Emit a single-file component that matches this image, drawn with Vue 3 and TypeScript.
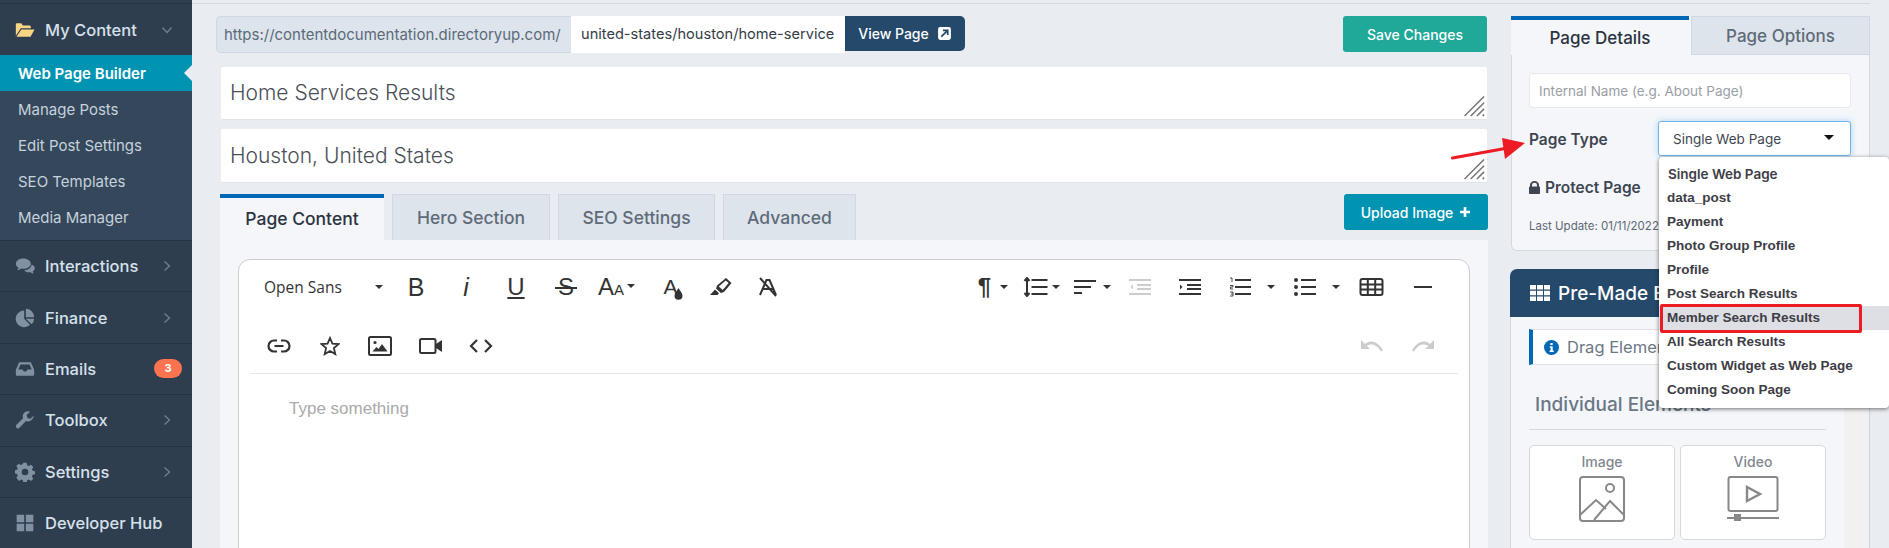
<template>
  <div class="page">
    <aside class="sidebar">
      <div class="nav-row nav-first">
        <svg class="nav-icon" viewBox="0 0 24 20"><path fill="#f8d583" d="M1 17V3.500C1 2.700 1.700 2 2.500 2h5l2 2.500h8c.8 0 1.500.7 1.500 1.500v2H7L1 17zM7.600 9.500H23.500L18.600 18H1.800z" /></svg>
        <span class="nav-label">My Content</span>
        <svg class="chev" viewBox="0 0 12 12"><path d="M1.500 3.500 6 8.500l4.500-5" /></svg>
      </div>
      <div class="sub-nav">
        <div v-for="(item, i) in subItems" :key="item" class="sub-item" :class="{ active: i === 0 }">{{ item }}</div>
      </div>
      <div v-for="item in navItems" :key="item.label" class="nav-row">
        <svg class="nav-icon" viewBox="0 0 24 24"><path fill="#7f91a2" :d="item.icon" /></svg>
        <span class="nav-label">{{ item.label }}</span>
        <span v-if="item.badge" class="badge">{{ item.badge }}</span>
        <svg v-else-if="item.arrow" class="chev" viewBox="0 0 12 12"><path d="M3.500 1.500 8.500 6l-5 4.500" /></svg>
      </div>
    </aside>

    <main class="content">
      <div class="left-col">
        <div class="url-row">
          <div class="url-group">
            <span class="url-prefix">https://contentdocumentation.directoryup.com/</span>
            <span class="url-input">united-states/houston/home-service</span>
            <button class="view-btn">View Page
              <svg width="15" height="15" viewBox="0 0 14 14"><rect x="1" y="1" width="12" height="12" rx="2" fill="#fff" /><path d="M4 10 9.500 4.500M5.500 4h4.500v4.500" stroke="#25496a" stroke-width="1.600" fill="none" /></svg>
            </button>
          </div>
          <button class="save-btn">Save Changes</button>
        </div>

        <div class="title-box title-one">Home Services Results<svg class="grip" viewBox="0 0 22 22"><path d="M.5 21 21 .5M7 21 21 7M13.500 21l7.500-7.500M19.500 21l1.500-1.500" /></svg></div>
        <div class="title-box title-two">Houston, United States<svg class="grip" viewBox="0 0 22 22"><path d="M.5 21 21 .5M7 21 21 7M13.500 21l7.500-7.500M19.500 21l1.500-1.500" /></svg></div>

        <div class="tab-row">
          <div class="tabs">
            <div v-for="(t, i) in contentTabs" :key="t" class="tab" :class="{ on: i === 0 }" :style="{ width: tabWidths[i] + 'px' }">{{ t }}</div>
          </div>
          <button class="upload-btn">Upload Image
            <svg width="12" height="12" viewBox="0 0 12 12"><path d="M6 1v10M1 6h10" stroke="#fff" stroke-width="2.600" /></svg>
          </button>
        </div>

        <div class="tab-panel">
          <div class="editor">
            <div class="toolbar">
              <div class="tool-row row-one">
                <div class="tool-group">
                  <span class="font-pick">Open Sans</span>
                  <i class="caret font-caret"></i>
                  <span class="tool glyph g-b">B</span>
                  <span class="tool glyph g-i">i</span>
                  <span class="tool glyph g-u"><u>U</u></span>
                  <span class="tool glyph g-s">S</span>
                  <span class="tool-size"><span class="a-big">A</span><span class="a-small">A</span><i class="caret"></i></span>
                  <span class="tool glyph g-a">A<svg width="9" height="12" viewBox="0 0 9 12"><path d="M4.500 0C6 3 8.500 5 8.500 7.800a4 4 0 0 1-8 0C.5 5 3 3 4.500 0z" fill="#333" /></svg></span>
                  <span class="tool t-mark"><svg width="24" height="20" viewBox="0 0 24 20"><path d="M8 8.500 17 1l5.500 5-7.500 9-3 1-5-4.500zM9.800 9.500l3.900 3.600 6-7-3-2.700z" fill="#333" fill-rule="evenodd" /><path d="M6 12.500l4 3.800-1.500 1.700H1z" fill="#333" /></svg></span>
                  <span class="tool t-clear"><svg width="24" height="20" viewBox="0 0 24 20"><path d="M4 18 10.500 3h3L20 18M7 12h10M4 1l16 18" stroke="#333" stroke-width="2" fill="none" /></svg></span>
                </div>
                <div class="tool-group">
                  <span class="para glyph">¶</span><i class="caret mr-p"></i>
                  <svg class="ic25" viewBox="0 0 25 20"><path d="M4 1v18M1.500 4 4 1l2.500 3M1.500 16 4 19l2.500-3M8.500 3h16M8.500 10h16M8.500 17h16" stroke="#333" stroke-width="2" fill="none" /></svg><i class="caret mr-lh ml4"></i>
                  <svg class="ic22" viewBox="0 0 22 20"><path d="M0 4h22M0 10h17M0 16h8" stroke="#333" stroke-width="2" /></svg><i class="caret mr20 ml8"></i>
                  <svg class="ic22 mr28" viewBox="0 0 22 20"><path d="M0 3h22M8 8h14M8 12h14M0 17h22" stroke="#ccc" stroke-width="2" /><path d="M4 7.500 1.500 10 4 12.500z" fill="#ccc" /></svg>
                  <svg class="ic22 mr28" viewBox="0 0 22 20"><path d="M0 3h22M8 8h14M8 12h14M0 17h22" stroke="#333" stroke-width="2" /><path d="M1 7.500 3.500 10 1 12.500z" fill="#333" /></svg>
                  <svg class="ic22" viewBox="0 0 22 20"><path d="M6 3h17M6 10h17M6 17h17" stroke="#333" stroke-width="2" /><path d="M1 1h2v4M1 8.500h3v1.500H1.500V12H4M1 15h3v4H1M2 17h2" stroke="#333" stroke-width=".9" fill="none" /></svg><i class="caret ml12 mr15"></i>
                  <svg class="ic22" viewBox="0 0 22 20"><path d="M7 3h15M7 10h15M7 17h15" stroke="#333" stroke-width="2" /><circle cx="2" cy="3" r="2" fill="#333" /><circle cx="2" cy="10" r="2" fill="#333" /><circle cx="2" cy="17" r="2" fill="#333" /></svg><i class="caret ml12 mr15"></i>
                  <svg class="ic25 mr30" viewBox="0 0 24 20"><rect x="1" y="2" width="22" height="16" rx="2" fill="none" stroke="#333" stroke-width="2" /><path d="M1 7.500h22M1 12.500h22M8.300 2v16M15.700 2v16" stroke="#333" stroke-width="2" /></svg>
                  <svg class="ic18 mr26" viewBox="0 0 18 20"><path d="M0 10h18" stroke="#333" stroke-width="2" /></svg>
                </div>
              </div>
              <div class="tool-row row-two">
                <div class="tool-group">
                  <span class="tool2"><svg width="24" height="14" viewBox="0 0 24 14"><path d="M10 1.500H7a5.500 5.500 0 0 0 0 11h3M14 1.500h3a5.500 5.500 0 0 1 0 11h-3M7.500 7h9" stroke="#333" stroke-width="2.200" fill="none" /></svg></span>
                  <span class="tool2"><svg width="20" height="20" viewBox="0 0 20 20"><path d="M10 2l2.400 5.600 6.100.5-4.600 4 1.400 6L10 15l-5.300 3.100 1.400-6-4.600-4 6.100-.5z" fill="none" stroke="#333" stroke-width="1.800" /></svg></span>
                  <span class="tool2"><svg width="24" height="20" viewBox="0 0 24 20"><rect x="1" y="1" width="22" height="18" rx="1.500" fill="none" stroke="#333" stroke-width="2" /><circle cx="7" cy="6.500" r="1.600" fill="#333" /><path d="M4.500 15.500 8.500 11l2 2 3.500-5 5.500 7.500z" fill="#333" /></svg></span>
                  <span class="tool2"><svg width="24" height="18" viewBox="0 0 24 18"><rect x="1" y="2" width="15.500" height="14" rx="1.500" fill="none" stroke="#333" stroke-width="2" /><path d="M17 7l6-4v12l-6-4z" fill="#333" /></svg></span>
                  <span class="tool2"><svg width="24" height="16" viewBox="0 0 24 16"><path d="M8 2 2 8l6 6M16 2l6 6-6 6" fill="none" stroke="#333" stroke-width="2.200" /></svg></span>
                </div>
                <div class="tool-group history">
                  <svg width="22" height="14" viewBox="0 0 22 14"><path d="M0 1v9h9L5.800 7C9 4.500 15 4.500 20 12.500l2-1C17 2 9 .5 4 5z" fill="#ccc" /></svg>
                  <svg width="22" height="14" viewBox="0 0 22 14"><path d="M22 1v9h-9l3.200-3C13 4.500 7 4.500 2 12.500l-2-1C5 2 13 .5 18 5z" fill="#ccc" /></svg>
                </div>
              </div>
            </div>
            <div class="edit-area">Type something</div>
          </div>
        </div>
      </div>

      <div class="right-col">
        <div class="details">
          <div class="detail-tabs">
            <div class="dtab on">Page Details</div>
            <div class="dtab">Page Options</div>
          </div>
          <div class="detail-body">
            <div class="name-input">Internal Name (e.g. About Page)</div>
            <div class="type-row">
              <label class="field-label">Page Type</label>
              <div class="select-wrap">
                <div class="select">Single Web Page<i class="caret sel-caret"></i></div>
                <ul class="drop">
                  <li v-for="(opt, i) in pageTypes" :key="opt" :class="{ hover: i === 6, first: i === 0 }">{{ opt }}</li>
                </ul>
                <div class="red-box"></div>
              </div>
            </div>
            <div class="field-label protect">
              <svg width="11" height="13" viewBox="0 0 11 13"><path d="M1 5.500V4a4.500 4 0 0 1 9 0v1.500h.2c.4 0 .8.400.8.800v5.900c0 .4-.4.800-.8.800H.8c-.4 0-.8-.4-.8-.8V6.300c0-.4.400-.8.800-.8zm2 0h5V4a2.500 2.200 0 0 0-5 0z" fill="#3f4652" /></svg>
              Protect Page
            </div>
            <div class="last-update">Last Update: 01/11/2022</div>
          </div>
        </div>

        <div class="premade">
          <div class="pre-head">
            <svg width="20" height="16" viewBox="0 0 20 16"><path fill="#fff" d="M0 0h6v4.500H0zM7 0h6v4.500H7zM14 0h6v4.500h-6zM0 5.700h6v4.500H0zM7 5.700h6v4.500H7zM14 5.700h6v4.500h-6zM0 11.400h6V16H0zM7 11.400h6V16H7zM14 11.400h6V16h-6z" /></svg>
            Pre-Made Elements
          </div>
          <div class="pre-wrap">
            <div class="pre-body">
              <div class="drag-note">
                <svg width="15" height="15" viewBox="0 0 15 15"><circle cx="7.500" cy="7.500" r="7.500" fill="#0068b5" /><path d="M6.300 3h2.400v2H6.300zM5.800 6.300h2.900v4.200h1v1.500H5.600v-1.500h1V7.800h-.8z" fill="#fff" /></svg>
                Drag Elements
              </div>
              <div class="ind-title">Individual Elements</div>
              <div class="cards">
                <div class="card">
                  <span>Image</span>
                  <svg width="46" height="46" viewBox="0 0 46 46"><rect x="1" y="1" width="44" height="44" rx="3" fill="none" stroke="#888" stroke-width="2" /><circle cx="31" cy="12" r="4" fill="none" stroke="#888" stroke-width="2" /><path d="M1 39 17 24l10 9M15 44l16-19 14 14" fill="none" stroke="#888" stroke-width="2" /></svg>
                </div>
                <div class="card">
                  <span>Video</span>
                  <svg width="52" height="46" viewBox="0 0 52 46"><rect x="1.500" y="1" width="49" height="34" rx="2" fill="none" stroke="#888" stroke-width="2" /><path d="M20 11v14l13-7z" fill="none" stroke="#888" stroke-width="2.400" /><path d="M0 42h52" stroke="#888" stroke-width="2" /><rect x="7" y="38" width="7" height="7" fill="#888" /></svg>
                </div>
              </div>
            </div>
            <div class="scroll-track"></div>
          </div>
        </div>
      </div>
    </main>

    <svg class="arrow" width="80" height="26" viewBox="0 0 80 26"><path d="M1.500 21 54 11.500" stroke="#ed1c24" stroke-width="3" stroke-linecap="round" /><path d="M74 6 51 1l3 21z" fill="#ed1c24" /></svg>
  </div>
</template>

<script setup lang="ts">
interface NavItem {
  label: string
  icon: string
  arrow?: boolean
  badge?: number
}

const subItems: string[] = ['Web Page Builder', 'Manage Posts', 'Edit Post Settings', 'SEO Templates', 'Media Manager']

const navItems: NavItem[] = [
  { label: 'Interactions', arrow: true, icon: 'M10 3C5 3 1 5.700 1 9.300c0 2 1.300 3.700 3.200 4.900-.3 1.200-1 2.200-1.800 3 1.800-.2 3.500-1 4.800-2.100 1 .2 1.800.3 2.800.3 5 0 9-2.700 9-6.100S15 3 10 3zM20 9.500c.1 4-4 7.400-9.300 7.600 1.300 1.500 3.500 2.500 6 2.500.7 0 1.300 0 2-.2 1 .9 2.200 1.400 3.800 1.600-.6-.7-1.100-1.400-1.300-2.300 1.500-1 2.500-2.400 2.500-4 0-2-1.400-3.700-3.700-4.600z' },
  { label: 'Finance', arrow: true, icon: 'M11 3v10l7 7a10 10 0 1 1-7-17zM13 1a10 10 0 0 1 10 10H13zM13 13h10a10 10 0 0 1-3 6.500z' },
  { label: 'Emails', badge: 3, icon: 'M5 4h14l4 9v6a1 1 0 0 1-1 1H2a1 1 0 0 1-1-1v-6zM6.500 6.500 4 12.500h5l1.500 2.500h3L15 12.500h5l-2.500-6z' },
  { label: 'Toolbox', arrow: true, icon: 'M22.500 6.500l-4 4-3.500-1-1-3.500 4-4c-3-1-6 0-7.500 2-1.300 1.800-1.500 4-.8 5.800L1.500 18a2.500 2.500 0 0 0 3.500 3.500l8.200-8.200c1.800.7 4 .5 5.800-.8 2-1.500 3.500-3.500 3.500-6z' },
  { label: 'Settings', arrow: true, icon: 'M10 1h4l.6 3 2 .9 2.600-1.700 2.800 2.800-1.700 2.600.9 2 3 .6v3.600l-3 .6-.9 2 1.700 2.600-2.800 2.800-2.600-1.700-2 .9-.6 3h-4l-.6-3-2-.9-2.600 1.700L1.600 19l1.700-2.600-.9-2-3-.6V10l3-.6.9-2L1.600 4.800 4.400 2l2.600 1.700 2-.9zM12 8a4 4 0 1 0 0 8 4 4 0 0 0 0-8z' },
  { label: 'Developer Hub', icon: 'M2 2h9v9H2zM13 2h9v9h-9zM2 13h9v9H2zM13 13h9v9h-9z' }
]

const contentTabs: string[] = ['Page Content', 'Hero Section', 'SEO Settings', 'Advanced']
const tabWidths: number[] = [164, 158, 157, 133]

const pageTypes: string[] = [
  'Single Web Page',
  'data_post',
  'Payment',
  'Photo Group Profile',
  'Profile',
  'Post Search Results',
  'Member Search Results',
  'All Search Results',
  'Custom Widget as Web Page',
  'Coming Soon Page'
]
</script>

<style>
html, body { margin: 0; background: #e9ecf1; }
</style>

<style scoped>
* { box-sizing: border-box; }

.page {
  display: flex;
  position: relative;
  width: 1889px;
  height: 548px;
  overflow: hidden;
  background: #e9ecf1;
  font-family: Inter, "Open Sans", sans-serif;
  color: #3f4652;
}

.sidebar {
  flex: 0 0 192px;
  background: #2f3e4f;
  padding-top: 3px;
}

.nav-row {
  display: flex;
  align-items: center;
  height: 51.400px;
  padding-left: 15px;
  border-top: 1px solid #263341;
  color: #d6e1ec;
  font-size: 16.500px;
  font-weight: 500;
}

.nav-first { height: 52px; }

.nav-icon { width: 20px; height: 20px; flex: none; }

.nav-label { margin-left: 10px; flex: 1; }

.chev {
  width: 12px;
  height: 12px;
  margin-right: 19px;
  fill: none;
  stroke: #6e8092;
  stroke-width: 1.300;
}

.badge {
  width: 28px;
  height: 19px;
  margin-right: 10px;
  border-radius: 10px;
  background: #ff7350;
  color: #fff;
  font-size: 11px;
  font-weight: 700;
  line-height: 19px;
  text-align: center;
}

.sub-nav {
  background: #34475b;
  padding-bottom: 5px;
}

.sub-item {
  position: relative;
  height: 36px;
  padding-left: 18px;
  line-height: 37px;
  font-size: 15px;
  color: #c6d2dd;
}

.sub-item.active {
  background: #0093b2;
  color: #fff;
  font-weight: 600;
}

.sub-item.active::after {
  content: "";
  position: absolute;
  right: 0;
  top: 10px;
  border: 8px solid transparent;
  border-right-color: #e9ecf1;
  border-left-width: 0;
}

.content {
  flex: 1;
  display: flex;
  min-width: 0;
  gap: 22px;
  padding-left: 24px;
  align-items: flex-start;
}

.content::before {
  content: "";
  position: absolute;
  left: 192px;
  top: 3px;
  width: 1678px;
  height: 1px;
  background: #d5d9de;
}

.left-col {
  flex: 0 0 1272px;
  padding-top: 16px;
}

.url-row {
  display: flex;
  justify-content: space-between;
  height: 37px;
}

.url-group {
  display: flex;
  height: 37px;
  font-size: 14.600px;
}

.url-prefix {
  width: 355px;
  padding-left: 7px;
  background: #dde4ec;
  border: 1px solid #cdd8e4;
  border-right: 0;
  border-radius: 5px 0 0 5px;
  color: #5a6a7a;
  font-size: 15px;
  line-height: 35px;
  white-space: nowrap;
  overflow: hidden;
}

.url-input {
  width: 274px;
  padding-left: 10px;
  background: #fff;
  color: #333c47;
  line-height: 37px;
  white-space: nowrap;
  overflow: hidden;
}

.view-btn {
  display: flex;
  align-items: center;
  justify-content: center;
  gap: 8px;
  width: 120px;
  height: 35px;
  border: 0;
  border-radius: 0 5px 5px 0;
  background: #25496a;
  color: #fff;
  font: 500 14px Inter, sans-serif;
}

.save-btn {
  width: 144px;
  height: 36px;
  margin-right: 1px;
  border: 0;
  border-radius: 3px;
  background: #20a899;
  color: #fff;
  font: 500 14px Inter, sans-serif;
}

.title-box {
  position: relative;
  margin-left: 5px;
  margin-right: 1px;
  padding-left: 9px;
  background: #fff;
  border-bottom: 1px solid #e0e3e8;
  border-radius: 2px;
  color: #4a4f57;
  font-size: 21px;
  font-weight: 300;
}

.title-one { margin-top: 14px; height: 53px; line-height: 52px; }
.title-two { margin-top: 9px; height: 54px; line-height: 53px; }

.grip {
  position: absolute;
  right: 2px;
  bottom: 2px;
  width: 21px;
  height: 21px;
  fill: none;
  stroke: #777;
  stroke-width: 1.600;
}

.tab-row {
  display: flex;
  justify-content: space-between;
  height: 46px;
  margin-top: 11px;
  margin-left: 4px;
}

.tabs {
  display: flex;
  gap: 8px;
}

.tab {
  height: 46px;
  background: #dde4ec;
  border: 1px solid #cfd9e4;
  border-bottom: 0;
  color: #5f6b78;
  font-size: 17.500px;
  font-weight: 500;
  line-height: 46px;
  text-align: center;
}

.tab.on {
  background: #f4f6fa;
  border: 0;
  border-top: 4px solid #0068b5;
  color: #2b3440;
  line-height: 41px;
}

.upload-btn {
  display: flex;
  align-items: center;
  justify-content: center;
  gap: 6px;
  width: 144px;
  height: 36px;
  border: 0;
  border-radius: 3px;
  background: #0093b2;
  color: #fff;
  font: 500 14px Inter, sans-serif;
}

.tab-panel {
  margin-left: 4px;
  height: 400px;
  padding: 19px 18px 0;
  background: #f4f6fa;
}

.editor {
  height: 400px;
  background: #fff;
  border: 1px solid #ccc;
  border-radius: 12px;
}

.toolbar {
  margin: 0 11px;
  height: 114px;
  border-bottom: 1px solid #e8e8e8;
  color: #333;
}

.tool-row {
  display: flex;
  justify-content: space-between;
  align-items: center;
  height: 56px;
}

.row-one { height: 54px; }

.row-two {
  margin-top: 4px;
  padding-left: 4px;
}

.tool-group {
  display: flex;
  align-items: center;
}

.font-pick {
  width: 125px;
  padding-left: 14px;
  font: 15.500px "Open Sans", sans-serif;
}

.caret {
  display: inline-block;
  border: 4px solid transparent;
  border-top-color: #333;
  border-bottom-width: 0;
}

.font-caret { margin-right: 4px; }

.tool {
  display: flex;
  align-items: center;
  justify-content: center;
  width: 50px;
}

.glyph {
  font-family: "Liberation Sans", sans-serif;
  color: #333;
}

.g-b { font-size: 25px; width: 50px; margin-left: 4px; }
.g-i { font-size: 25px; font-style: italic; }
.g-u { font-size: 24px; }
.g-s { position: relative; font-size: 24px; }

.g-s::after {
  content: "";
  position: absolute;
  left: 14px;
  right: 14px;
  top: 50%;
  height: 2px;
  background: #333;
}

.g-a { font-size: 21px; width: 40px; margin-left: 13px; }
.g-a svg { margin: 13px 0 0 -4px; }

.t-mark { margin-left: 3px; }
.t-clear { margin-left: -3px; }

.tool-size {
  display: flex;
  align-items: center;
  width: 42px;
  margin-left: 7px;
  color: #333;
  font-family: "Liberation Sans", sans-serif;
  font-size: 24px;
}

.a-small { font-size: 15px; margin-top: 5px; }
.tool-size .caret { margin: -2px 0 0 3px; }

.para { font-size: 24px; font-weight: 700; margin-right: 9px; }

.ic25 { width: 25px; height: 20px; }
.ic22 { width: 22px; height: 20px; }
.ic18 { width: 18px; height: 20px; }

.mr-p { margin-right: 15px; }
.mr-lh { margin-right: 14px; }
.mr15 { margin-right: 19px; }
.mr20 { margin-right: 18px; }
.mr26 { margin-right: 26px; }
.mr28 { margin-right: 28px; }
.mr30 { margin-right: 30px; }
.ml4 { margin-left: 4px; }
.ml8 { margin-left: 7px; }
.ml12 { margin-left: 16px; }

.tool2 {
  display: flex;
  align-items: center;
  justify-content: center;
  width: 50.500px;
  height: 24px;
}

.history {
  gap: 29px;
  margin-right: 24px;
}

.edit-area {
  padding: 25px 0 0 50px;
  color: #aaa;
  font: 17px "Liberation Sans", sans-serif;
}

.right-col {
  flex: 0 0 360px;
  padding-top: 16px;
}

.details {
  height: 235px;
  margin-left: 1px;
  width: 359px;
  background: #f4f6fa;
  border: 1px solid #d5d9de;
  border-top: 0;
  border-radius: 0 0 6px 6px;
}

.detail-tabs {
  display: flex;
  height: 39px;
  margin-left: -1px;
  margin-right: -1px;
  font-size: 17px;
  font-weight: 500;
}

.dtab {
  flex: 1;
  margin-left: 2px;
  background: #dde4ec;
  border: 1px solid #cfd9e4;
  color: #5f6b78;
  line-height: 39px;
  text-align: center;
}

.dtab.on {
  flex: 0 0 178px;
  margin-left: 0;
  background: #f4f6fa;
  border: 0;
  border-top: 4px solid #0068b5;
  color: #2b3440;
  line-height: 36px;
}

.detail-body {
  position: relative;
  padding: 18px 18px 0 17px;
}

.name-input {
  height: 35px;
  padding-left: 9px;
  background: #fff;
  border: 1px solid #e6e8ec;
  border-radius: 4px;
  color: #9a9ea5;
  font-size: 13.500px;
  line-height: 35px;
}

.type-row {
  display: flex;
  align-items: center;
  justify-content: space-between;
  margin-top: 13px;
  height: 35px;
}

.field-label {
  color: #3f4652;
  font-size: 15.500px;
  font-weight: 600;
}

.type-row .field-label { padding-top: 2px; }

.select-wrap {
  position: relative;
  width: 193px;
}

.select {
  position: relative;
  height: 35px;
  padding-left: 14px;
  background: #fff;
  border: 1px solid #74b5ee;
  border-radius: 3px;
  box-shadow: 0 0 6px #a9d4f7;
  color: #3f4652;
  font-size: 13.500px;
  line-height: 35px;
}

.sel-caret {
  position: absolute;
  right: 16px;
  top: 13px;
  border-width: 5px 5px 0;
  border-top-color: #111;
}

.drop {
  position: absolute;
  z-index: 3;
  left: 1px;
  top: 36px;
  width: 230px;
  height: 251px;
  margin: 0;
  padding: 5px 0 0;
  list-style: none;
  background: #fff;
  border-radius: 4px;
  box-shadow: 0 1px 4px rgba(0, 0, 0, 0.55);
  color: #3d3d45;
  font: 700 13.500px "Liberation Sans", sans-serif;
}

.drop li {
  height: 24px;
  padding-left: 8px;
  line-height: 24px;
}

.drop li.first {
  padding-left: 9px;
  font-family: Inter, sans-serif;
  font-weight: 600;
  font-size: 13.500px;
}

.drop li.hover {
  background: #dedfe5;
}

.red-box {
  position: absolute;
  z-index: 4;
  left: 2px;
  top: 183px;
  width: 202px;
  height: 29px;
  border: 3px solid #ed1c24;
  border-radius: 2px;
}

.protect {
  display: flex;
  align-items: center;
  gap: 5px;
  margin-top: 21px;
  height: 20px;
}

.last-update {
  margin-top: 22px;
  color: #5e6874;
  font-size: 11.500px;
}

.premade {
  margin-top: 18px;
}

.pre-head {
  display: flex;
  align-items: center;
  gap: 8px;
  height: 48px;
  padding-left: 20px;
  background: #25496a;
  border-radius: 7px 7px 0 0;
  color: #fff;
  font-size: 19px;
  font-weight: 500;
}

.pre-wrap {
  display: flex;
  height: 240px;
}

.pre-body {
  flex: 1;
  padding: 12px 18px 0 18px;
  background: #f4f6fa;
  border-left: 1px solid #d5d9de;
}

.drag-note {
  display: flex;
  align-items: center;
  gap: 8px;
  height: 36px;
  margin-right: -18px;
  padding-left: 11px;
  background: #fff;
  border: 1px solid #dfe3e8;
  border-left: 4px solid #0068b5;
  color: #6b7785;
  font-size: 16.500px;
}

.ind-title {
  margin-top: 28px;
  padding: 0 0 13px 6px;
  border-bottom: 1px solid #d5d9de;
  color: #6b7785;
  font-size: 19px;
  font-weight: 500;
}

.cards {
  display: flex;
  gap: 5px;
  margin-top: 15px;
}

.card {
  display: flex;
  flex-direction: column;
  align-items: center;
  gap: 6px;
  width: 146px;
  height: 95px;
  padding-top: 7px;
  background: #fff;
  border: 1px solid #d5d9de;
  border-radius: 5px;
  color: #7f8790;
  font-size: 14px;
  font-weight: 500;
}

.scroll-track {
  flex: 0 0 26px;
  background: #f1f1f1;
  border-right: 1px solid #cfd2d6;
}

.arrow {
  position: absolute;
  z-index: 5;
  left: 1451px;
  top: 137px;
}
</style>
